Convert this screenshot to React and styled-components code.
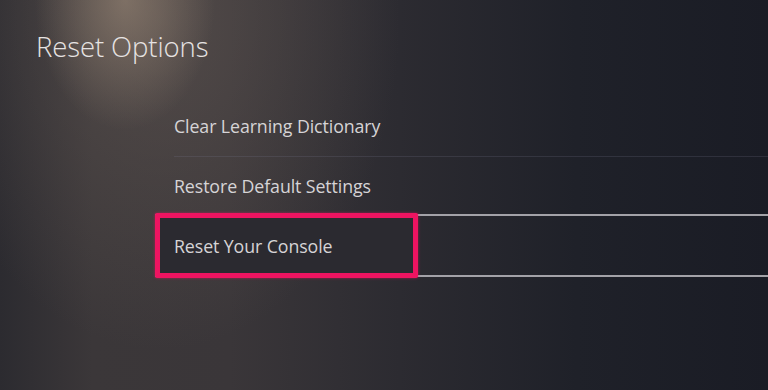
import React from "react";
import styled, { createGlobalStyle } from "styled-components";

const Global = createGlobalStyle`
  html, body { margin: 0; padding: 0; width: 768px; height: 390px; overflow: hidden; }
  body { font-family: "Open Sans", "Noto Sans", sans-serif; }
`;

const Screen = styled.div`
  width: 768px;
  height: 390px;
  box-sizing: border-box;
  padding: 26px 0 0 36px;
  background:
    radial-gradient(ellipse 90px 130px at 125px 0px, rgba(165,145,126,0.55), rgba(165,145,126,0) 100%),
    radial-gradient(ellipse 240px 330px at 160px 20px, rgba(105,94,88,0.5), rgba(105,94,88,0) 100%),
    linear-gradient(90deg, #2c2b30 0%, #3b3739 12%, #3a3639 30%, #2c2b31 52%, #1f2129 75%, #1a1c25 100%);
  overflow: hidden;
`;

const Title = styled.h1`
  margin: 0;
  font-size: 27.5px;
  font-weight: 300;
  color: #e6e3e2;
  letter-spacing: -0.1px;
  line-height: 42px;
`;

const List = styled.div`
  display: flex;
  flex-direction: column;
  margin: 28px 0 0 119px;
`;

const Row = styled.div`
  position: relative;
  height: 60px;
  display: flex;
  align-items: center;
  padding-left: 19px;
  font-size: 17.8px;
  color: #d6d4d6;
  letter-spacing: -0.1px;
`;

const Label = styled.span`
  position: relative;
  z-index: 1;
`;

const Separator = styled.div`
  position: absolute;
  left: 19px;
  right: 0;
  bottom: -1px;
  height: 1px;
  background: rgba(120, 120, 140, 0.22);
`;

const SelLine = styled.div`
  position: absolute;
  left: 0;
  right: 0;
  height: 2px;
  background: #a3a2a8;
  ${(p) => (p.$top ? "top: -2px;" : "bottom: -1px;")}
`;

const Highlight = styled.div`
  position: absolute;
  left: 0;
  top: -3px;
  bottom: -2px;
  width: 263px;
  box-sizing: border-box;
  border: 5px solid #ee1461;
  border-radius: 2px;
  box-shadow: 0 0 3px rgba(238, 20, 97, 0.6);
  background: #2b2a30;
`;

export default function App() {
  return (
    <Screen>
      <Global />
      <Title>Reset Options</Title>
      <List>
        <Row>
          <Label>Clear Learning Dictionary</Label>
          <Separator />
        </Row>
        <Row>
          <Label>Restore Default Settings</Label>
        </Row>
        <Row>
          <SelLine $top />
          <SelLine />
          <Highlight />
          <Label>Reset Your Console</Label>
        </Row>
      </List>
    </Screen>
  );
}
